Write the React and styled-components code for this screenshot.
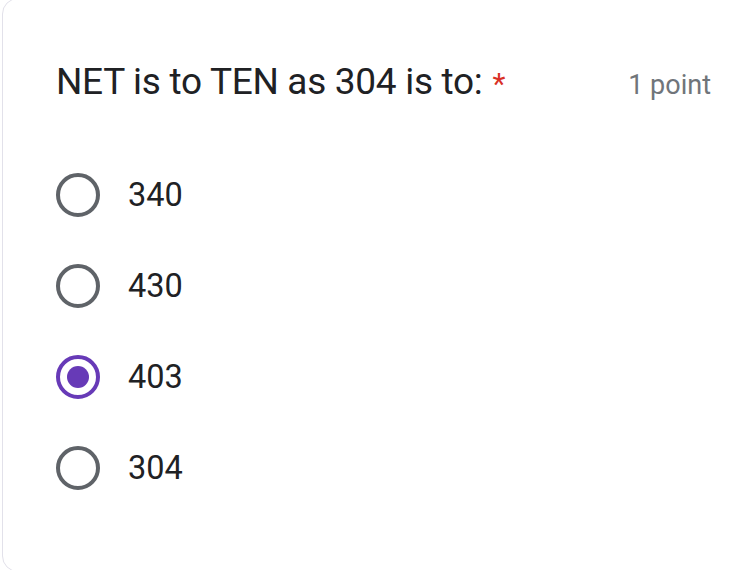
import React from "react";
import styled, { createGlobalStyle } from "styled-components";

const Global = createGlobalStyle`
  html, body { margin: 0; padding: 0; background: #ffffff; overflow: hidden; }
  body { font-family: Roboto, "Noto Sans", sans-serif; }
`;

const Page = styled.div`
  width: 750px;
  height: 570px;
  overflow: hidden;
  background: #fff;
`;

const Card = styled.div`
  box-sizing: border-box;
  margin-left: 2px;
  margin-top: -2px;
  width: 790px;
  height: 574px;
  border: 1.5px solid #e2e1ea;
  border-radius: 16px;
  background: #fff;
  padding: 60px 80px 0 53px;
`;

const Header = styled.div`
  display: flex;
  justify-content: space-between;
  align-items: baseline;
`;

const Title = styled.div`
  font-family: Roboto, sans-serif;
  font-size: 37px;
  line-height: 46px;
  color: #202124;
  letter-spacing: -0.3px;
`;

const Required = styled.span`
  color: #d93025;
  margin-left: 10px;
  font-size: 30px;
`;

const Points = styled.div`
  font-size: 27px;
  color: #70757a;
`;

const Options = styled.div`
  display: flex;
  flex-direction: column;
  margin-top: 66px;
  gap: 47px;
`;

const Option = styled.label`
  display: flex;
  align-items: center;
  gap: 28px;
`;

const Radio = styled.span`
  box-sizing: border-box;
  width: 44px;
  height: 44px;
  border-radius: 50%;
  border: 4.4px solid ${(p) => (p.$checked ? "#673ab7" : "#5f6368")};
  display: flex;
  align-items: center;
  justify-content: center;
  flex: none;
`;

const Dot = styled.span`
  width: 22px;
  height: 22px;
  border-radius: 50%;
  background: #673ab7;
`;

const OptionText = styled.span`
  font-size: 32.5px;
  line-height: 44px;
  color: #202124;
`;

const options = ["340", "430", "403", "304"];

export default function App() {
  return (
    <Page>
      <Global />
      <Card>
        <Header>
          <Title>
            NET is to TEN as 304 is to:<Required>*</Required>
          </Title>
          <Points>1 point</Points>
        </Header>
        <Options>
          {options.map((o) => (
            <Option key={o}>
              <Radio $checked={o === "403"}>{o === "403" && <Dot />}</Radio>
              <OptionText>{o}</OptionText>
            </Option>
          ))}
        </Options>
      </Card>
    </Page>
  );
}
